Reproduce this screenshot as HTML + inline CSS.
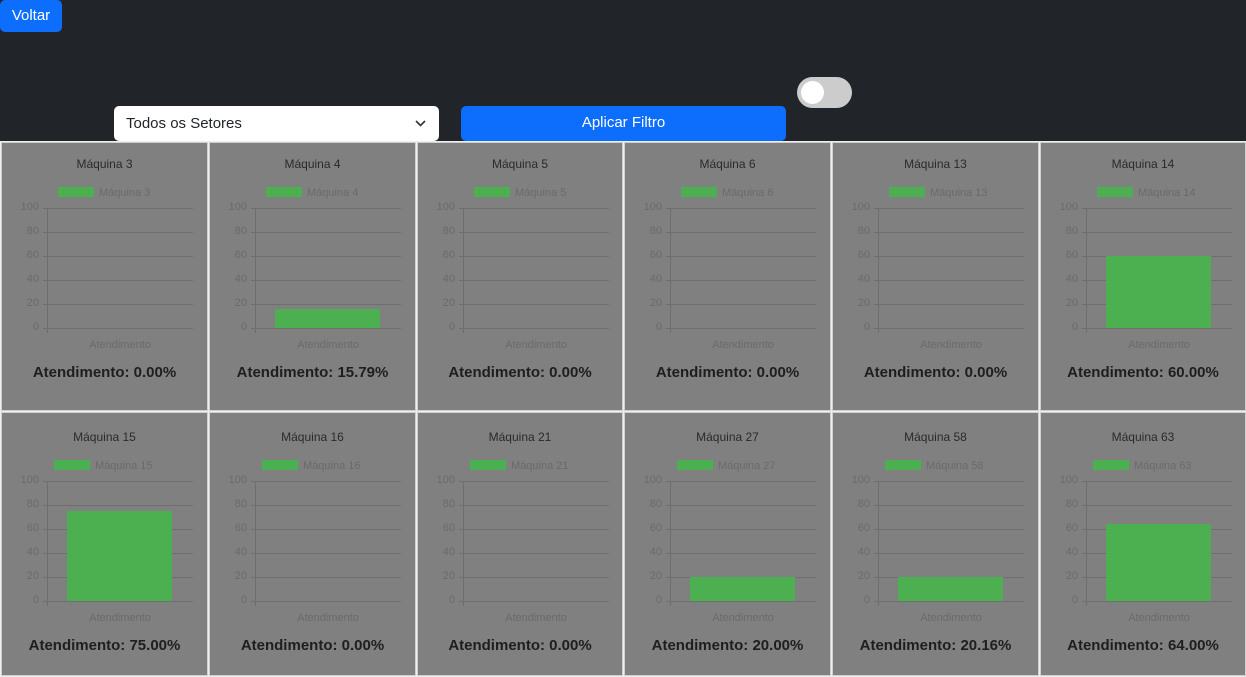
<!DOCTYPE html>
<html><head><style>
*{box-sizing:border-box;margin:0;padding:0}
body{width:1246px;height:677px;background:#212529;font-family:"Liberation Sans",Arial,sans-serif;position:relative;overflow:hidden}
.btn{position:absolute;background:#0d6efd;color:#fff;border-radius:5px;font-size:15px;text-align:center}
.sel{position:absolute;left:114px;top:106px;width:325px;height:35px;background:#fff;border-radius:5px;font-size:15px;color:#212529;padding:9px 12px}
.tog{position:absolute;left:797px;top:77px;width:55px;height:31px;border-radius:16px;background:#ccc}
.tog:after{content:"";position:absolute;left:4px;top:4px;width:23px;height:23px;border-radius:50%;background:#fff}
.card{position:absolute;background:#808080;border:1px solid #eee;box-shadow:inset 0 0 0 1px #d0d0d0;overflow:hidden}
.t{position:absolute;left:0;right:0;text-align:center;font-size:12px;color:#2a2a2a}
.lg{position:absolute;font-size:11px;color:#6a6a6a}
.lg i{display:inline-block;width:36px;height:10px;background:#4caf50;vertical-align:-1px;margin-right:5px}
.yl{position:absolute;font-size:11px;color:#6a6a6a;width:30px;text-align:right}
.gl{position:absolute;height:1px;background:#6e6e6e}
.ax{position:absolute;width:1px;background:#6e6e6e}
.bar{position:absolute;background:#4caf50}
.xl{position:absolute;font-size:11px;color:#6a6a6a;text-align:center}
.big{position:absolute;left:0;right:0;text-align:center;font-size:15px;font-weight:bold;color:#1e1e1e}
</style></head><body>
<div class="btn" style="left:0;top:0;width:62px;height:32px;line-height:31px">Voltar</div>
<div class="sel">Todos os Setores<svg style="position:absolute;right:13px;top:14px" width="11" height="7" viewBox="0 0 11 7"><path d="M1 1l4.5 4.5L10 1" stroke="#333" stroke-width="1.6" fill="none"/></svg></div>
<div class="btn" style="left:461px;top:106px;width:325px;height:35px;line-height:34px">Aplicar Filtro</div>
<div class="tog"></div>
<div id="g"></div>
<script>
var d=[["3",0],["4",15.79],["5",0],["6",0],["13",0],["14",60],["15",75],["16",0],["21",0],["27",20],["58",20.16],["63",64]];
var xs=[0,208,416,623,831,1039,1246],h="";
d.forEach(function(m,i){var c=i%6,r=Math.floor(i/6);var top=r?411:141,ht=r?266:271;var w=xs[c+1]-xs[c]+1;
var o=r?3:0;
h+='<div class="card" style="left:'+xs[c]+'px;top:'+top+'px;width:'+w+'px;height:'+ht+'px">';
h+='<div class="t" style="top:'+(15+o)+'px">Máquina '+m[0]+'</div>';
h+='<div class="lg" style="left:'+(57-(r?4:0))+'px;top:'+(45+o)+'px"><i></i>Máquina '+m[0]+'</div>';
var pt=66+o,pb=186+o;
for(var k=0;k<=5;k++){var y=pt+(pb-pt)*k/5;h+='<div class="gl" style="left:42px;width:150px;top:'+y+'px"></div><div class="yl" style="left:8px;top:'+(y-7)+'px">'+(100-20*k)+'</div>';}
h+='<div class="ax" style="left:46px;top:'+pt+'px;height:125px"></div>';
if(m[1]>0){var bh=(pb-pt)*m[1]/100;h+='<div class="bar" style="left:66px;width:105px;top:'+(pb-bh)+'px;height:'+bh+'px"></div>';}
h+='<div class="xl" style="left:46px;width:146px;top:'+(197+o)+'px">Atendimento</div>';
h+='<div class="big" style="top:'+(222+o)+'px">Atendimento: '+m[1].toFixed(2)+'%</div></div>';});
document.getElementById('g').innerHTML=h;
</script>
</body></html>
